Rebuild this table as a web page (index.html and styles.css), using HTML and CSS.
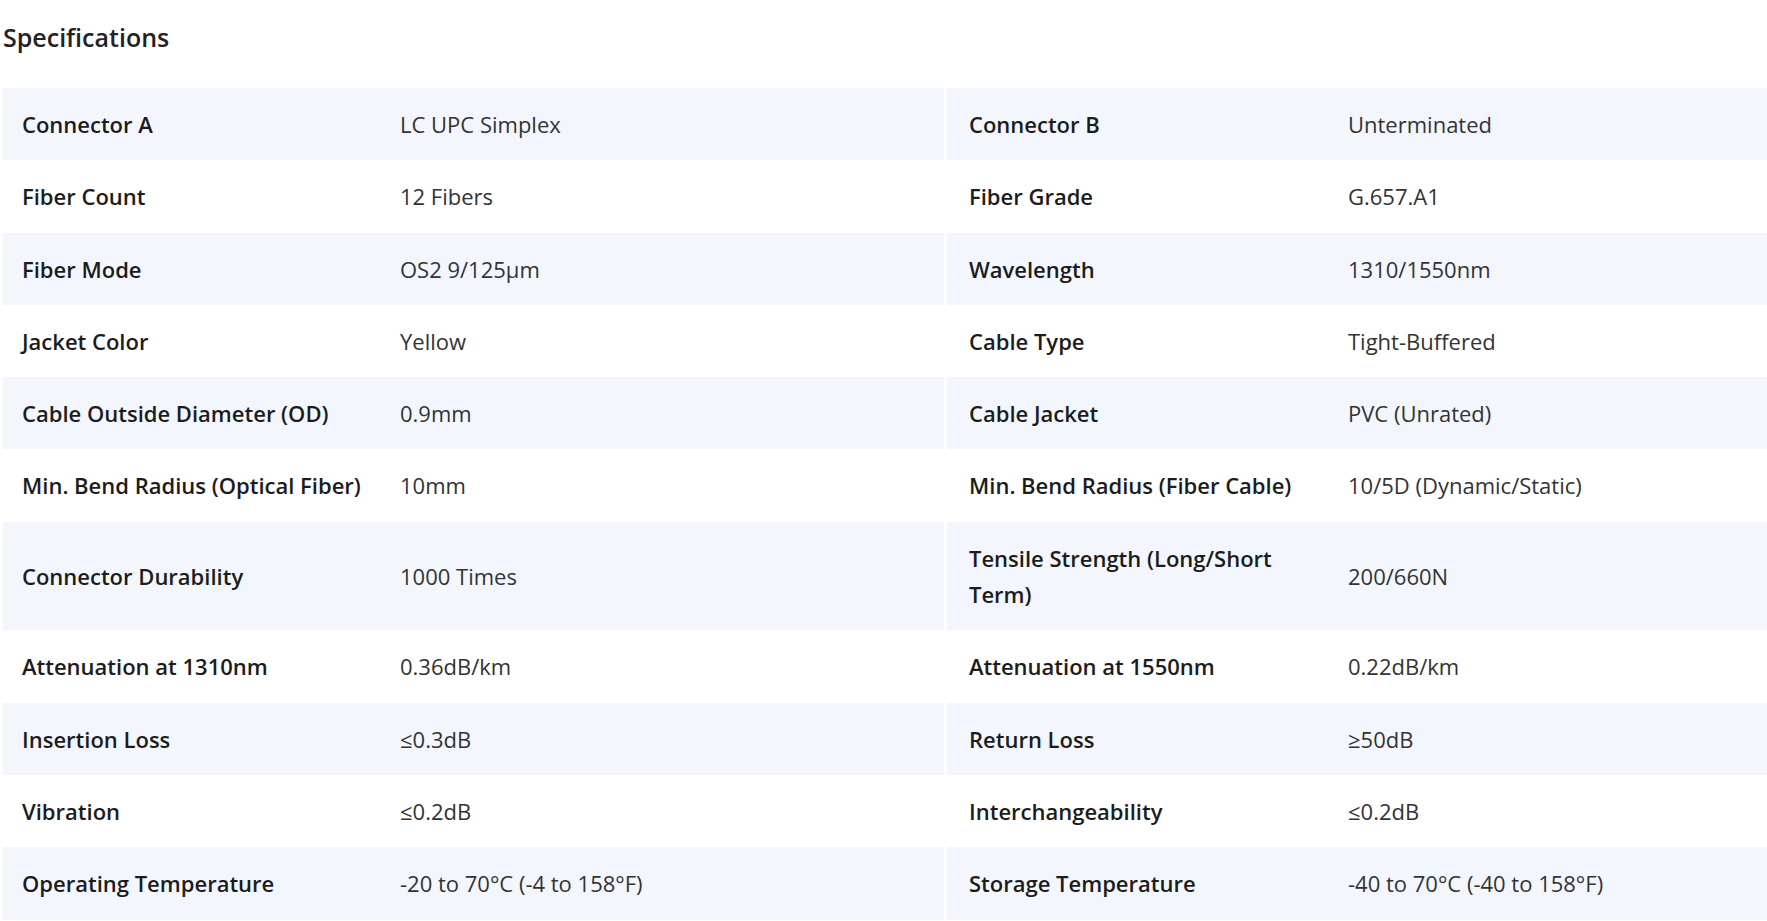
FILE: index.html
```html
<!DOCTYPE html>
<html lang="en">
<head>
<meta charset="utf-8">
<title>Specifications</title>
<link rel="stylesheet" href="styles.css">
</head>
<body>
<section class="specs">
  <h2 class="specs-title">Specifications</h2>
  <div class="spec-table">
    <div class="row shade">
      <div class="cell label">Connector A</div><div class="cell value">LC UPC Simplex</div>
      <div class="cell label split">Connector B</div><div class="cell value">Unterminated</div>
    </div>
    <div class="row">
      <div class="cell label">Fiber Count</div><div class="cell value">12 Fibers</div>
      <div class="cell label split">Fiber Grade</div><div class="cell value">G.657.A1</div>
    </div>
    <div class="row shade">
      <div class="cell label">Fiber Mode</div><div class="cell value">OS2 9/125μm</div>
      <div class="cell label split">Wavelength</div><div class="cell value">1310/1550nm</div>
    </div>
    <div class="row">
      <div class="cell label">Jacket Color</div><div class="cell value">Yellow</div>
      <div class="cell label split">Cable Type</div><div class="cell value">Tight-Buffered</div>
    </div>
    <div class="row shade">
      <div class="cell label">Cable Outside Diameter (OD)</div><div class="cell value">0.9mm</div>
      <div class="cell label split">Cable Jacket</div><div class="cell value">PVC (Unrated)</div>
    </div>
    <div class="row">
      <div class="cell label">Min. Bend Radius (Optical Fiber)</div><div class="cell value">10mm</div>
      <div class="cell label split">Min. Bend Radius (Fiber Cable)</div><div class="cell value">10/5D (Dynamic/Static)</div>
    </div>
    <div class="row shade">
      <div class="cell label">Connector Durability</div><div class="cell value">1000 Times</div>
      <div class="cell label split">Tensile Strength (Long/Short Term)</div><div class="cell value">200/660N</div>
    </div>
    <div class="row">
      <div class="cell label">Attenuation at 1310nm</div><div class="cell value">0.36dB/km</div>
      <div class="cell label split">Attenuation at 1550nm</div><div class="cell value">0.22dB/km</div>
    </div>
    <div class="row shade">
      <div class="cell label">Insertion Loss</div><div class="cell value">≤0.3dB</div>
      <div class="cell label split">Return Loss</div><div class="cell value">≥50dB</div>
    </div>
    <div class="row">
      <div class="cell label">Vibration</div><div class="cell value">≤0.2dB</div>
      <div class="cell label split">Interchangeability</div><div class="cell value">≤0.2dB</div>
    </div>
    <div class="row shade">
      <div class="cell label">Operating Temperature</div><div class="cell value">-20 to 70°C (-4 to 158°F)</div>
      <div class="cell label split">Storage Temperature</div><div class="cell value">-40 to 70°C (-40 to 158°F)</div>
    </div>
  </div>
</section>
</body>
</html>
```

FILE: styles.css
```css
html, body {
  margin: 0;
  padding: 0;
  background: #ffffff;
}

body {
  font-family: "Open Sans", "Noto Sans", "Liberation Sans", sans-serif;
  color: #1f1f1f;
}

.specs {
  padding-left: 3px;
}

.specs-title {
  margin: 0;
  padding-top: 21px;
  height: 88px;
  box-sizing: border-box;
  font-size: 25px;
  line-height: 32px;
  font-weight: 600;
  color: #222222;
}

.spec-table {
  display: flex;
  flex-direction: column;
}

.row {
  display: grid;
  grid-template-columns: 378px 563px 385px 1fr;
}

.row.shade .cell {
  background: #f3f7fd;
}

.cell {
  display: flex;
  align-items: center;
  padding: 18px 8px 18px 19px;
  font-size: 22px;
  line-height: 1.65;
}

.label {
  font-weight: 600;
  color: #1c1c1c;
}

.value {
  font-weight: 400;
  color: #333333;
}

.split {
  border-left: 3px solid #ffffff;
  padding-left: 22px;
  padding-right: 16px;
}
```
